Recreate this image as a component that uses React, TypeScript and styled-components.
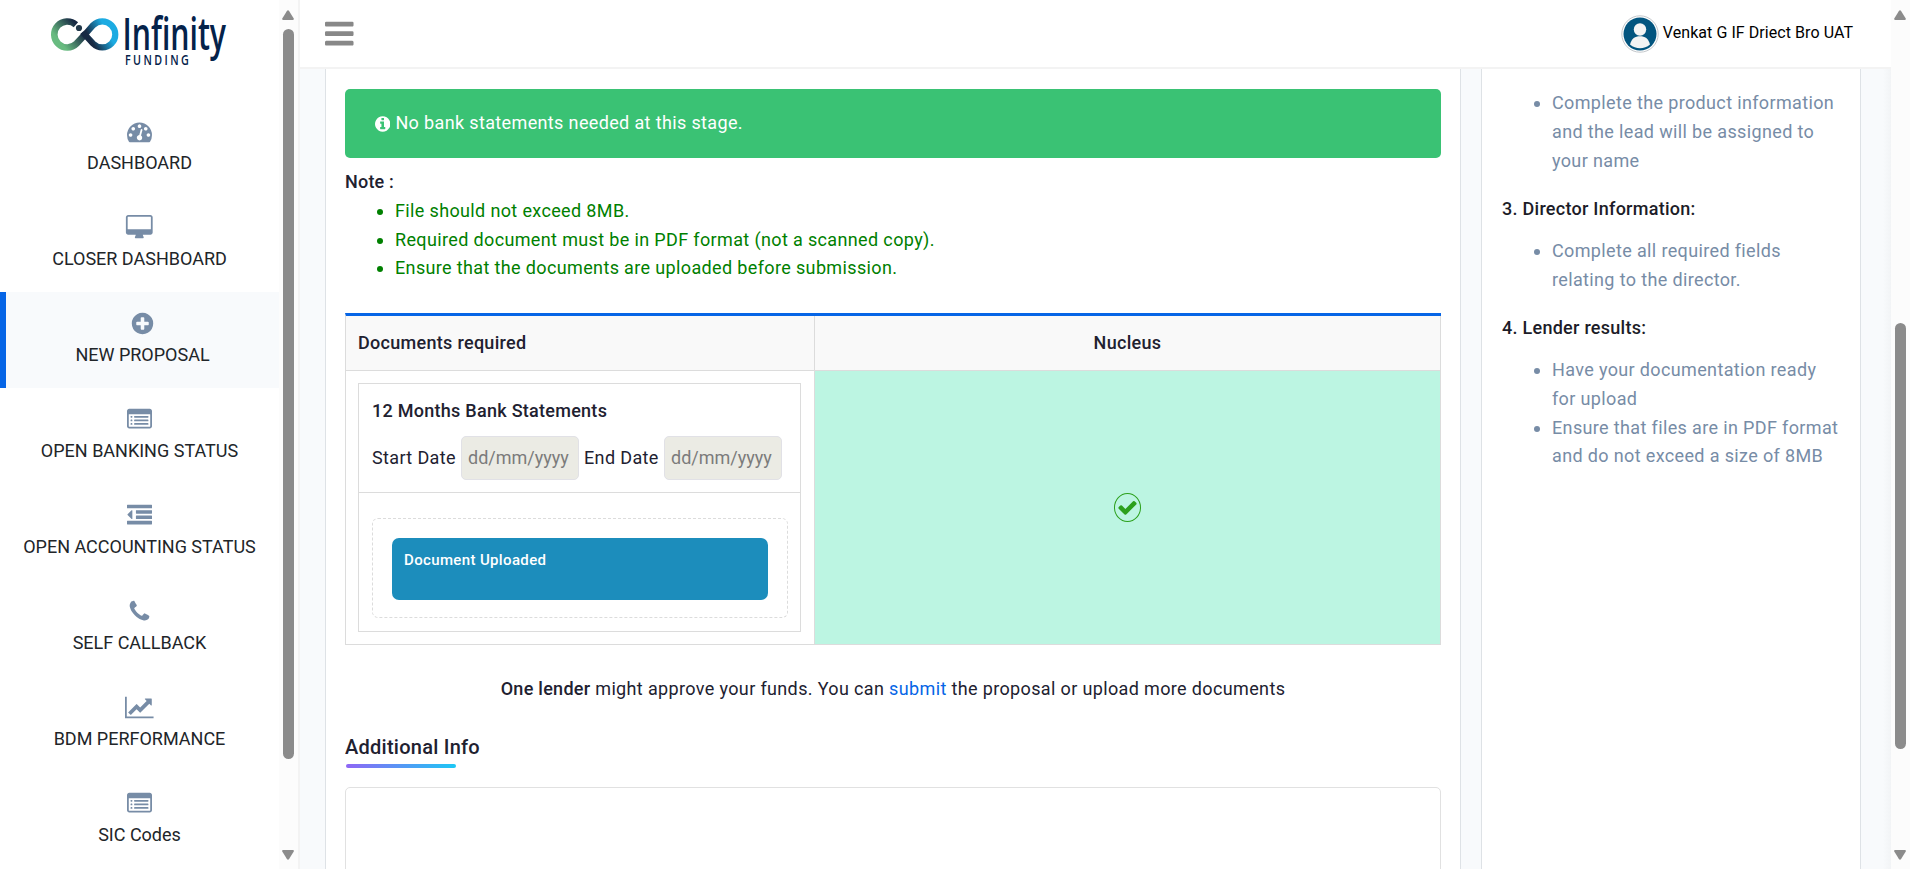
import React from 'react';
import styled, { createGlobalStyle, css } from 'styled-components';

const GlobalStyle = createGlobalStyle`
  *, *::before, *::after { box-sizing: border-box; }
  html, body { margin: 0; padding: 0; height: 100%; overflow: hidden; }
  body {
    background: #f8fafc;
    color: #212130;
    font-family: Roboto, "Liberation Sans", sans-serif;
    font-size: 18px;
    line-height: 28.8px;
  }
`;

/* ---------- icons ---------- */

const square = 'v64q0 13-9.5 22.5t-22.5 9.5h-64q-13 0-22.5-9.5t-9.5-22.5v-64q0-13 9.5-22.5t22.5-9.5h64q13 0 22.5 9.5t9.5 22.5z';
const rule = 'v64q0 13-9.5 22.5t-22.5 9.5h-960q-13 0-22.5-9.5t-9.5-22.5v-64q0-13 9.5-22.5t22.5-9.5h960q13 0 22.5 9.5t9.5 22.5z';
const longBar = 'v192q0 13-9.5 22.5t-22.5 9.5h-1728q-13 0-22.5-9.5t-9.5-22.5v-192q0-13 9.5-22.5t22.5-9.5h1728q13 0 22.5 9.5t9.5 22.5z';
const shortBar = 'v192q0 13-9.5 22.5t-22.5 9.5h-1088q-13 0-22.5-9.5t-9.5-22.5v-192q0-13 9.5-22.5t22.5-9.5h1088q13 0 22.5 9.5t9.5 22.5z';
const menuBar = 'v128q0 26-19 45t-45 19h-1408q-26 0-45-19t-19-45v-128q0-26 19-45t45-19h1408q26 0 45 19t19 45z';
const disc = 'q0 209-103 385.5t-279.5 279.5-385.5 103-385.5-103-279.5-279.5-103-385.5 103-385.5 279.5-279.5 385.5-103 385.5 103 279.5 279.5 103 385.5z';
const dot = 'q0-53-37.5-90.5t-90.5-37.5-90.5 37.5-37.5 90.5 37.5 90.5 90.5 37.5 90.5-37.5 37.5-90.5z';

const glyphs = {
  gauge: { w: 1792, d: `M384 1152${dot}m192-448${dot}m428 481l101-382q6-26-7.5-48.5t-38.5-29.5-48 6.5-30 39.5l-101 382q-60 5-107 43.5t-63 98.5q-20 77 20 146t117 89 146-20 89-117q16-60-6-117t-72-91zm660-33${dot}m-640-640${dot}m448 192${dot}m320 448q0 261-141 483-19 29-54 29h-1402q-35 0-54-29-141-221-141-483 0-182 71-348t191-286 286-191 348-71 348 71 286 191 191 286 71 348z` },
  desktop: { w: 2048, d: 'M1856 992v-832q0-13-9.5-22.5t-22.5-9.5h-1600q-13 0-22.5 9.5t-9.5 22.5v832q0 13 9.5 22.5t22.5 9.5h1600q13 0 22.5-9.5t9.5-22.5zm128-832v1088q0 66-47 113t-113 47h-544q0 37 16 77.5t32 71 16 43.5q0 26-19 45t-45 19h-512q-26 0-45-19t-19-45q0-14 16-44t32-70 16-78h-544q-66 0-113-47t-47-113v-1088q0-66 47-113t113-47h1600q66 0 113 47t47 113z' },
  plus: { w: 1792, d: `M1344 960v-128q0-26-19-45t-45-19h-256v-256q0-26-19-45t-45-19h-128q-26 0-45 19t-19 45v256h-256q-26 0-45 19t-19 45v128q0 26 19 45t45 19h256v256q0 26 19 45t45 19h128q26 0 45-19t19-45v-256h256q26 0 45-19t19-45zm320-64${disc}` },
  listAlt: { w: 1792, d: `M384 1184${square}m0-256${square}m0-256${square}m1152 512${rule}m0-256${rule}m0-256${rule}m128 704v-832q0-13-9.5-22.5t-22.5-9.5h-1472q-13 0-22.5 9.5t-9.5 22.5v832q0 13 9.5 22.5t22.5 9.5h1472q13 0 22.5-9.5t9.5-22.5zm128-1088v1088q0 66-47 113t-113 47h-1472q-66 0-113-47t-47-113v-1088q0-66 47-113t113-47h1472q66 0 113 47t47 113z` },
  outdent: { w: 1792, d: `M384 544v576q0 13-9.5 22.5t-22.5 9.5q-14 0-23-9l-288-288q-9-9-9-23t9-23l288-288q9-9 23-9 13 0 22.5 9.5t9.5 22.5zm1408 768${longBar}m0-384${shortBar}m0-384${shortBar}m0-384${longBar}` },
  phone: { w: 1792, d: 'M1600 1240q0 27-10 70.5t-21 68.5q-21 50-122 106-94 51-186 51-27 0-53-3.5t-57.5-12.5-47-14.5-55.5-20.5-49-18q-98-35-175-83-127-79-264-216t-216-264q-48-77-83-175-3-9-18-49t-20.5-55.5-14.5-47-12.5-57.5-3.5-53q0-92 51-186 56-101 106-122 25-11 68.5-21t70.5-10q14 0 21 3 18 6 53 76 11 19 30 54t35 63.5 31 53.5q3 4 17.5 25t21.5 35.5 7 28.5q0 20-28.5 50t-62 55-62 53-28.5 46q0 9 5 22.5t8.5 20.5 14 24 11.5 19q76 137 174 235t235 174q2 1 19 11.5t24 14 20.5 8.5 22.5 5q18 0 46-28.5t53-62 55-62 50-28.5q14 0 28.5 7t35.5 21.5 25 17.5q25 15 53.5 31t63.5 35 54 30q70 35 76 53 3 7 3 21z' },
  lineChart: { w: 2048, d: 'M2048 1536v128h-2048v-1536h128v1408h1920zm-128-1248v435q0 21-19.5 29.5t-35.5-7.5l-121-121-633 633q-10 10-23 10t-23-10l-233-233-416 416-192-192 585-585q10-10 23-10t23 10l233 233 464-464-121-121q-16-16-7.5-35.5t29.5-19.5h435q14 0 23 9t9 23z' },
  info: { w: 1536, x: 128, d: `M1152 1376v-160q0-14-9-23t-23-9h-96v-512q0-14-9-23t-23-9h-320q-14 0-23 9t-9 23v160q0 14 9 23t23 9h96v320h-96q-14 0-23 9t-9 23v160q0 14 9 23t23 9h448q14 0 23-9t9-23zm-128-896v-160q0-14-9-23t-23-9h-192q-14 0-23 9t-9 23v160q0 14 9 23t23 9h192q14 0 23-9t9-23zm640 416${disc}` },
  check: { w: 1792, d: 'M1671 566q0 40-28 68l-724 724-136 136q-28 28-68 28t-68-28l-136-136-362-362q-28-28-28-68t28-68l136-136q28-28 68-28t68 28l294 295 656-657q28-28 68-28t68 28l136 136q28 28 28 68z' },
  menu: { w: 1536, x: 128, d: `M1664 1344${menuBar}m0-512${menuBar}m0-512${menuBar}` },
};

type GlyphName = keyof typeof glyphs;

const Svg = styled.svg`
  display: block;
  flex: none;
  fill: currentColor;
`;

function Icon({ name, size }: { name: GlyphName; size: number }) {
  const g: { w: number; d: string; x?: number } = glyphs[name];
  return (
    <Svg width={(g.w / 1792) * size} height={size} viewBox={`${g.x ?? 0} 0 ${g.w} 1792`}>
      <path d={g.d} />
    </Svg>
  );
}

/* ---------- frame ---------- */

const Frame = styled.div`
  display: flex;
  width: 100%;
  height: 869px;
  overflow: hidden;
`;

const Sidebar = styled.aside`
  display: flex;
  flex: none;
  width: 300px;
  background: #fff;
  border-right: 2px solid #f3f3f3;
`;

const SidebarBody = styled.div`
  width: 279px;
  height: 100%;
  overflow: hidden;
`;

const LogoBox = styled.div`
  height: 100px;
  svg { display: block; }
`;

const LogoWord = styled.text`
  font-family: "Open Sans", "Noto Sans", sans-serif;
  font-weight: 600;
  fill: #04224a;
`;

const NavItem = styled.a<{ $active?: boolean }>`
  display: flex;
  flex-direction: column;
  align-items: center;
  gap: 5px;
  height: 96px;
  padding-top: 19px;
  color: #212529;
  white-space: nowrap;
  ${(p) =>
    p.$active &&
    css`
      background: #f8fafc;
      border-left: 6px solid #0665e6;
    `}
  svg { color: #778ca6; }
`;

const Rail = styled.div`
  display: flex;
  flex-direction: column;
  align-items: center;
  flex: none;
  width: 19px;
  height: 100%;
  padding: 10px 1px 9px 0;
  background: #fcfcfc;
`;

const Track = styled.div<{ $before: number }>`
  flex: 1;
  padding-top: ${(p) => p.$before}px;
`;

const Thumb = styled.div<{ $size: number }>`
  width: 11px;
  height: ${(p) => p.$size}px;
  border-radius: 6px;
  background: #8b8b8b;
`;

function Scrollbar({ before, size }: { before: number; size: number }) {
  return (
    <Rail>
      <Svg width="12" height="10" viewBox="0 0 12 10" color="#8b8b8b">
        <path d="M1 10Q-.4 9.600.4 8.200L4.900 1Q6-.6 7.100 1L11.600 8.200Q12.400 9.600 11 10Z" />
      </Svg>
      <Track $before={before}>
        <Thumb $size={size} />
      </Track>
      <Svg width="12" height="10" viewBox="0 0 12 10" color="#8b8b8b">
        <path d="M1 0Q-.4.400.4 1.800L4.900 9Q6 10.600 7.100 9L11.600 1.800Q12.400.400 11 0Z" />
      </Svg>
    </Rail>
  );
}

const Page = styled.div`
  display: flex;
  flex-direction: column;
  flex: 1;
  min-width: 0;
`;

const Header = styled.header`
  display: flex;
  align-items: flex-start;
  justify-content: space-between;
  flex: none;
  height: 69px;
  padding: 15px 38px 0 25px;
  background: #fff;
  border-bottom: 2px solid #f3f3f3;
`;

const MenuButton = styled.button`
  margin-top: 2px;
  padding: 0;
  border: 0;
  background: none;
  color: #888;
`;

const User = styled.div`
  display: flex;
  gap: 4px;
  color: #000;
  font-size: 16px;
  line-height: 35px;
  letter-spacing: 0.06px;
`;

const Content = styled.main`
  display: flex;
  gap: 20px;
  flex: 1;
  min-height: 0;
  padding: 0 30px 0 25px;
  overflow: hidden;
  background: linear-gradient(90deg, #f8fafc calc(100% - 8px), #f2f4f6);
  letter-spacing: 0.36px;
`;

const Card = styled.section`
  flex: 1;
  min-width: 0;
  padding: 20px 19px 0;
  background: #fff;
  border: solid #dee2e6;
  border-width: 0 1px;
`;

/* ---------- main card ---------- */

const Alert = styled.div`
  display: flex;
  align-items: center;
  gap: 5px;
  height: 69px;
  padding: 0 30px;
  border-radius: 5px;
  background: #3ac274;
  color: #fff;
`;

const Note = styled.div`
  margin-top: 10px;
  font-weight: 500;
  letter-spacing: 0.2px;
`;

const Bullets = styled.ul<{ $tone: 'green' | 'muted' }>`
  margin: 0;
  padding-left: 50px;
  color: ${(p) => (p.$tone === 'green' ? '#008000' : '#778ca6')};
`;

const DocGrid = styled.div`
  display: grid;
  grid-template-columns: 469px 1fr;
  grid-template-rows: 55px 274px;
  margin-top: 29.5px;
  border-top: 3px solid #0665e6;
  border-left: 1px solid #dcdcdc;
`;

const HeadCell = styled.div<{ $center?: boolean }>`
  display: flex;
  align-items: center;
  justify-content: ${(p) => (p.$center ? 'center' : 'flex-start')};
  padding: 1px 12px 0;
  background: #f9f9f9;
  border: solid #dcdcdc;
  border-width: 0 1px 1px 0;
  font-weight: 500;
  letter-spacing: 0.3px;
`;

const Cell = styled.div<{ $approved?: boolean }>`
  display: flex;
  align-items: center;
  justify-content: ${(p) => (p.$approved ? 'center' : 'flex-start')};
  padding: 12px;
  border: solid #dcdcdc;
  border-width: 0 1px 1px 0;
  ${(p) =>
    p.$approved &&
    css`
      background: #bcf5e2;
    `}
`;

const Statement = styled.div`
  display: flex;
  flex-direction: column;
  width: 443px;
  height: 249px;
  border: 1px solid #dcdcdc;
`;

const StatementTop = styled.div`
  height: 109px;
  padding: 13px 13px 0;
  border-bottom: 1px solid #dcdcdc;
`;

const StatementTitle = styled.div`
  font-weight: 500;
  letter-spacing: 0.27px;
`;

const Dates = styled.div`
  display: flex;
  align-items: center;
  margin-top: 10.5px;
  white-space: nowrap;
`;

const DateLabel = styled.label<{ $width: number }>`
  width: ${(p) => p.$width}px;
`;

const DateInput = styled.input`
  width: 118px;
  height: 44px;
  margin-right: 5px;
  padding: 0 6px;
  border: 1px solid #e1e1e6;
  border-radius: 5px;
  background: #ebebe4;
  font: 400 18px Roboto, sans-serif;
  &::placeholder { color: #7b7b7b; }
`;

const DropZone = styled.div`
  width: 416px;
  height: 100px;
  margin: 25px 13px 0;
  padding: 19px;
  border: 1px dashed #dcdcdc;
  border-radius: 6px;
`;

const Uploaded = styled.div`
  height: 62px;
  padding: 8px 12px;
  border-radius: 7px;
  background: #1c8dbc;
  color: #fff;
  font-size: 15px;
  font-weight: 500;
`;

const Approved = styled.span`
  display: flex;
  align-items: center;
  justify-content: center;
  width: 27px;
  height: 29px;
  border: 1px solid #2ca01c;
  border-radius: 50%;
  color: #2ca01c;
`;

const Verdict = styled.p`
  margin: 30px 0 0;
  text-align: center;
  b { font-weight: 500; letter-spacing: 0.28px; }
  a { color: #0665e6; }
`;

const SectionTitle = styled.h2`
  margin: 28px 0 0;
  font-size: 20px;
  font-weight: 500;
  line-height: 32px;
  letter-spacing: 0.25px;
`;

const TitleBar = styled.div`
  width: 110px;
  height: 4px;
  margin: 0.500px 0 19px 1px;
  border-radius: 2px;
  background: linear-gradient(90deg, #8f66f5, #1cc8f5);
`;

const InfoBox = styled.textarea`
  display: block;
  width: 100%;
  height: 200px;
  border: 1px solid #e1e1e1;
  border-radius: 5px;
  background: #fff;
  resize: none;
`;

/* ---------- guide ---------- */

const Guide = styled(Card)`
  flex: none;
  width: 380px;
  padding: 20px 19px 0 20px;
`;

const GuideTitle = styled.div`
  margin: 20px 0 12.7px;
  font-weight: 500;
  color: #1c1c28;
  letter-spacing: 0.27px;
`;

const nav: { icon: GlyphName; label: string; active?: boolean }[] = [
  { icon: 'gauge', label: 'DASHBOARD' },
  { icon: 'desktop', label: 'CLOSER DASHBOARD' },
  { icon: 'plus', label: 'NEW PROPOSAL', active: true },
  { icon: 'listAlt', label: 'OPEN BANKING STATUS' },
  { icon: 'outdent', label: 'OPEN ACCOUNTING STATUS' },
  { icon: 'phone', label: 'SELF CALLBACK' },
  { icon: 'lineChart', label: 'BDM PERFORMANCE' },
  { icon: 'listAlt', label: 'SIC Codes' },
];

function Logo() {
  return (
    <svg width="279" height="80" viewBox="0 0 279 80" fill="none">
      <defs>
        <linearGradient id="leaf" gradientUnits="userSpaceOnUse" x1="61" y1="43" x2="79" y2="28">
          <stop offset="0" stopColor="#68bb80" />
          <stop offset="1" stopColor="#182a44" />
        </linearGradient>
        <linearGradient id="sky" gradientUnits="userSpaceOnUse" x1="91" y1="40" x2="107" y2="31">
          <stop offset="0" stopColor="#182a44" />
          <stop offset="1" stopColor="#1cabe2" />
        </linearGradient>
      </defs>
      <path d="M75.900 24.700A13 13 0 1 0 76.500 43.600L85 34.400" stroke="url(#leaf)" strokeWidth="6.600" />
      <path d="M84.500 35L93.100 25.200A13 13 0 1 1 93.100 43.600L82.500 32" stroke="url(#sky)" strokeWidth="6.200" />
      <circle cx="79" cy="28" r="3.100" fill="#22384a" />
      <LogoWord fontSize="45" textLength="139" lengthAdjust="spacingAndGlyphs" transform="translate(122.500 50) scale(.745 1)">Infinity</LogoWord>
      <LogoWord fontSize="13.400" letterSpacing="3" transform="translate(125 64.600) scale(.8 1)">FUNDING</LogoWord>
    </svg>
  );
}

function Avatar() {
  return (
    <Svg width="38" height="38" viewBox="0 0 38 38">
      <circle cx="19" cy="19" r="18.200" fill="#fff" stroke="#c4c8cc" />
      <circle cx="19" cy="19" r="16.500" fill="#03557f" />
      <circle cx="19" cy="14.500" r="6.200" fill="#f4f4f4" />
      <path d="M9 29.500C10.500 23.500 14 21.300 19 21.300S27.500 23.500 29 29.500Q24.500 33.300 19 33.300T9 29.500Z" fill="#f4f4f4" />
    </Svg>
  );
}

export default function App() {
  return (
    <Frame>
      <GlobalStyle />
      <Sidebar>
        <SidebarBody>
          <LogoBox>
            <Logo />
          </LogoBox>
          {nav.map((n) => (
            <NavItem key={n.label} $active={n.active}>
              <Icon name={n.icon} size={25} />
              {n.label}
            </NavItem>
          ))}
        </SidebarBody>
        <Scrollbar before={9} size={730} />
      </Sidebar>

      <Page>
        <Header>
          <MenuButton aria-label="Menu">
            <Icon name="menu" size={33.3} />
          </MenuButton>
          <User>
            <Avatar />
            <span>Venkat G IF Driect Bro UAT</span>
          </User>
        </Header>

        <Content>
          <Card>
            <Alert>
              <Icon name="info" size={18} />
              <span>No bank statements needed at this stage.</span>
            </Alert>
            <Note>Note :</Note>
            <Bullets $tone="green">
              <li>File should not exceed 8MB.</li>
              <li>Required document must be in PDF format (not a scanned copy).</li>
              <li>Ensure that the documents are uploaded before submission.</li>
            </Bullets>

            <DocGrid>
              <HeadCell>Documents required</HeadCell>
              <HeadCell $center>Nucleus</HeadCell>
              <Cell>
                <Statement>
                  <StatementTop>
                    <StatementTitle>12 Months Bank Statements</StatementTitle>
                    <Dates>
                      <DateLabel $width={89}>Start Date</DateLabel>
                      <DateInput placeholder="dd/mm/yyyy" />
                      <DateLabel $width={80}>End Date</DateLabel>
                      <DateInput placeholder="dd/mm/yyyy" />
                    </Dates>
                  </StatementTop>
                  <DropZone>
                    <Uploaded>Document Uploaded</Uploaded>
                  </DropZone>
                </Statement>
              </Cell>
              <Cell $approved>
                <Approved>
                  <Icon name="check" size={21} />
                </Approved>
              </Cell>
            </DocGrid>

            <Verdict>
              <b>One lender</b> might approve your funds. You can <a>submit</a> the proposal or upload more documents
            </Verdict>

            <SectionTitle>Additional Info</SectionTitle>
            <TitleBar />
            <InfoBox />
          </Card>

          <Guide>
            <Bullets $tone="muted">
              <li>Complete the product information and the lead will be assigned to your name</li>
            </Bullets>
            <GuideTitle>3. Director Information:</GuideTitle>
            <Bullets $tone="muted">
              <li>Complete all required fields relating to the director.</li>
            </Bullets>
            <GuideTitle>4. Lender results:</GuideTitle>
            <Bullets $tone="muted">
              <li>Have your documentation ready for upload</li>
              <li>Ensure that files are in PDF format and do not exceed a size of 8MB</li>
            </Bullets>
          </Guide>
        </Content>
      </Page>
      <Scrollbar before={303} size={426} />
    </Frame>
  );
}
